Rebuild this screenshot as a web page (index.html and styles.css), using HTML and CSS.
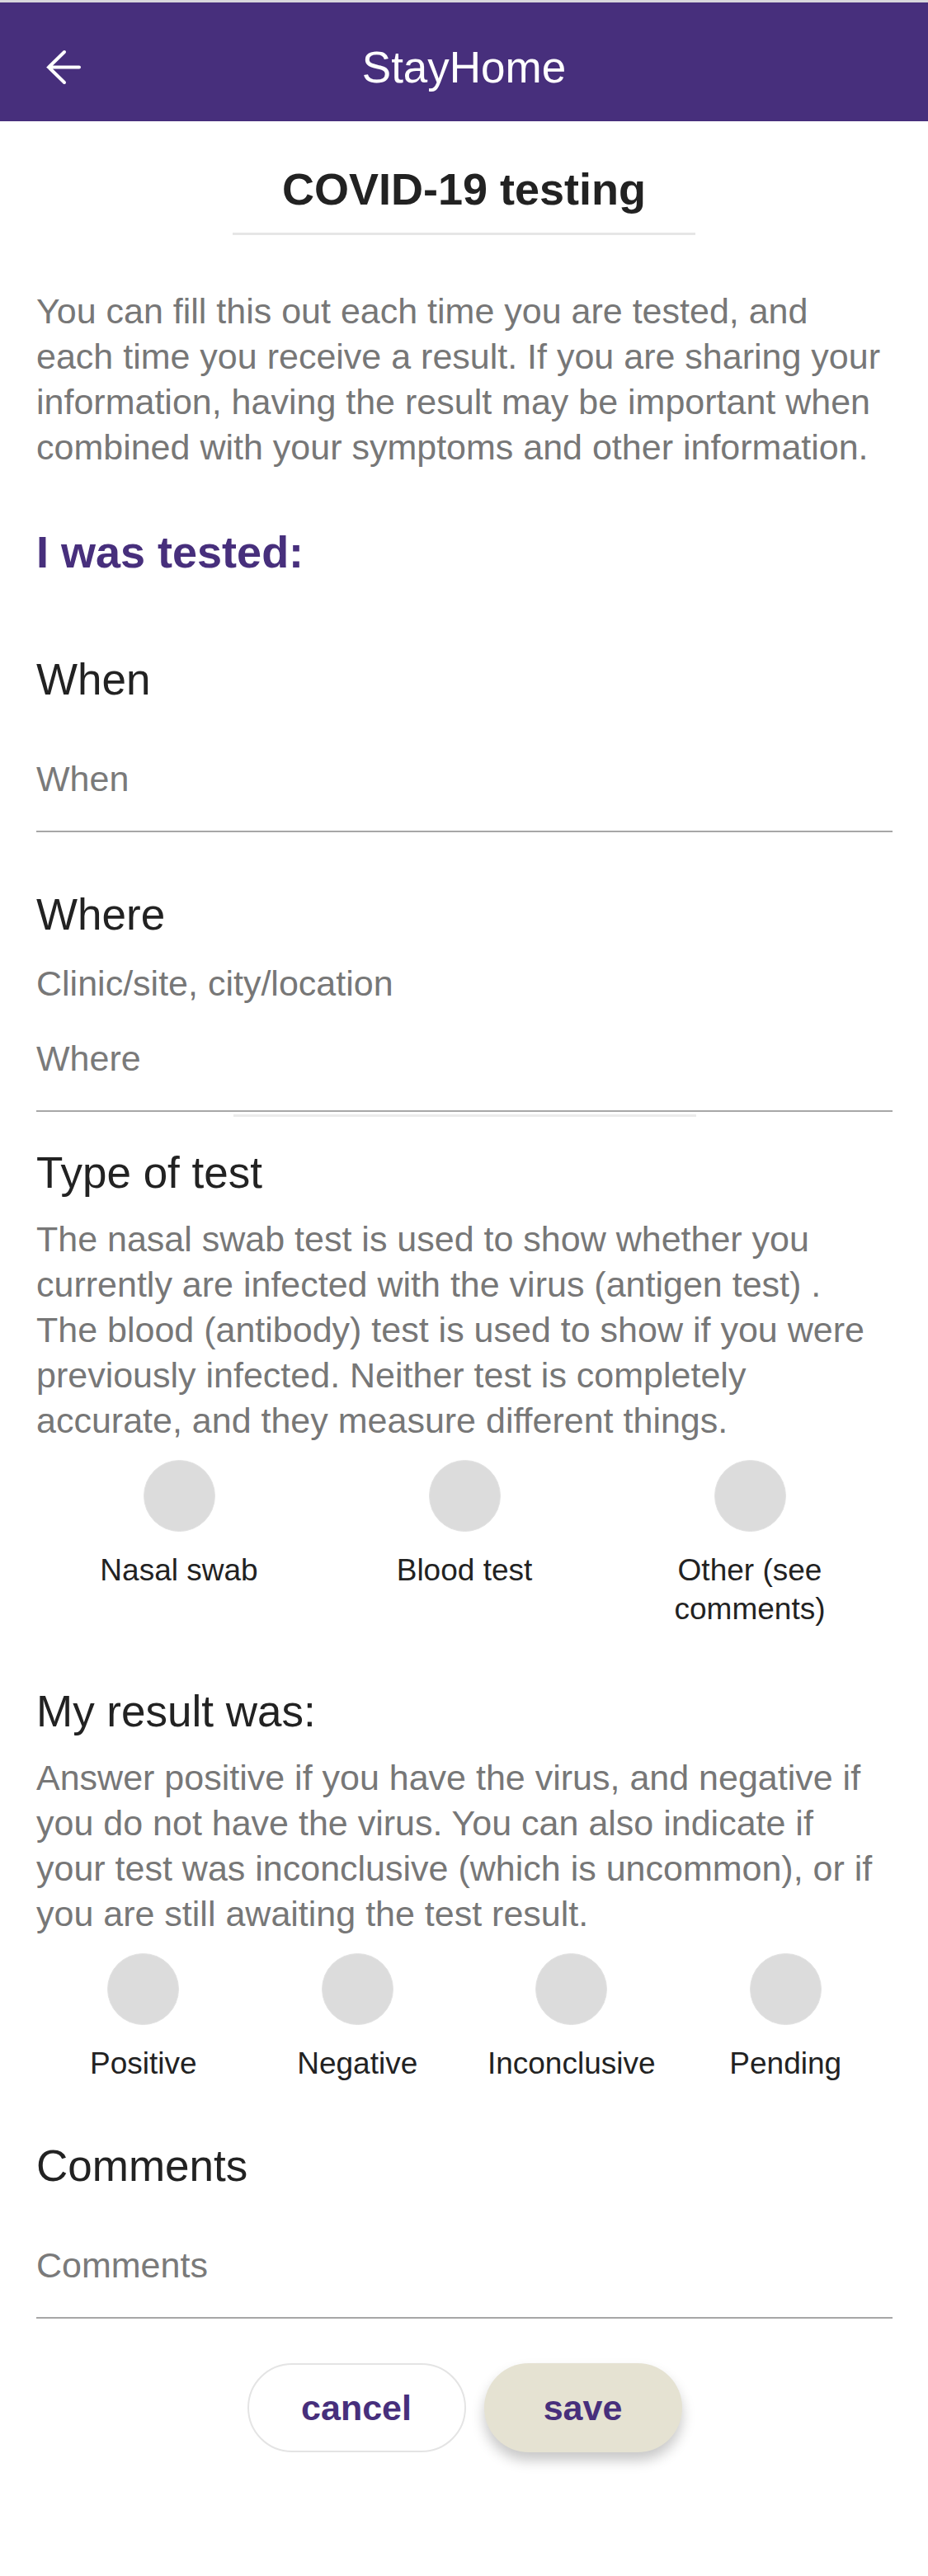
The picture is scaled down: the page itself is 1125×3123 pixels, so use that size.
FILE: index.html
```html
<!DOCTYPE html>
<html lang="en">
<head>
<meta charset="utf-8">
<title>StayHome - COVID-19 testing</title>
<link rel="stylesheet" href="styles.css">
</head>
<body>
<div class="statusbar"></div>
<header class="appbar">
  <button class="back" aria-label="Back">
    <svg viewBox="0 0 43 43" width="43" height="43" aria-hidden="true">
      <path d="M41 21.5 H4 M23 3 L4 21.5 L23 40" fill="none" stroke="#fff" stroke-width="4" stroke-linecap="round" stroke-linejoin="miter"/>
    </svg>
  </button>
  <h1 class="appbar-title">StayHome</h1>
  <span class="appbar-spacer"></span>
</header>

<main class="page">
  <div class="title-wrap">
    <h2 class="page-title">COVID-19 testing</h2>
    <div class="title-rule"></div>
  </div>

  <div class="content">
    <p class="intro">You can fill this out each time you are tested, and<br>each time you receive a result. If you are sharing your<br>information, having the result may be important when<br>combined with your symptoms and other information.</p>

    <h3 class="section-title">I was tested:</h3>

    <div class="field">
      <div class="field-label">When</div>
      <div class="input">When</div>
    </div>

    <div class="field field-where">
      <div class="field-label">Where</div>
      <div class="field-hint">Clinic/site, city/location</div>
      <div class="input input-after-hint">Where</div>
    </div>
    <div class="ghost-rule"></div>

    <div class="field field-type">
      <div class="field-label">Type of test</div>
      <p class="field-desc">The nasal swab test is used to show whether you<br>currently are infected with the virus (antigen test) .<br>The blood (antibody) test is used to show if you were<br>previously infected. Neither test is completely<br>accurate, and they measure different things.</p>
      <div class="options options-3">
        <div class="option"><span class="radio"></span><span class="option-label">Nasal swab</span></div>
        <div class="option"><span class="radio"></span><span class="option-label">Blood test</span></div>
        <div class="option"><span class="radio"></span><span class="option-label">Other (see<br>comments)</span></div>
      </div>
    </div>

    <div class="field field-section">
      <div class="field-label">My result was:</div>
      <p class="field-desc">Answer positive if you have the virus, and negative if<br>you do not have the virus. You can also indicate if<br>your test was inconclusive (which is uncommon), or if<br>you are still awaiting the test result.</p>
      <div class="options options-4">
        <div class="option"><span class="radio"></span><span class="option-label">Positive</span></div>
        <div class="option"><span class="radio"></span><span class="option-label">Negative</span></div>
        <div class="option"><span class="radio"></span><span class="option-label">Inconclusive</span></div>
        <div class="option"><span class="radio"></span><span class="option-label">Pending</span></div>
      </div>
    </div>

    <div class="field field-section">
      <div class="field-label">Comments</div>
      <div class="input">Comments</div>
    </div>

    <div class="actions">
      <button class="btn btn-cancel">cancel</button>
      <button class="btn btn-save">save</button>
    </div>
  </div>
</main>
</body>
</html>
```

FILE: styles.css
```css
html, body {
  margin: 0;
  padding: 0;
  background: #ffffff;
}

body {
  font-family: "Liberation Sans", Arial, Helvetica, sans-serif;
  color: #222222;
  min-height: 3123px;
}

.statusbar {
  height: 3px;
  background: #d8d7dc;
}

.appbar {
  height: 144px;
  box-sizing: border-box;
  padding-top: 13px;
  background: #472f7c;
  display: grid;
  grid-template-columns: 1fr auto 1fr;
  align-items: center;
}

.back {
  justify-self: start;
  margin-left: 55px;
  width: 43px;
  height: 43px;
  padding: 0;
  border: none;
  background: transparent;
  display: flex;
}

.appbar-title {
  margin: 0;
  font-size: 53px;
  line-height: 60px;
  font-weight: normal;
  color: #ffffff;
}

.title-wrap {
  padding-top: 50px;
  text-align: center;
}

.page-title {
  margin: 0;
  font-size: 54px;
  line-height: 64px;
  font-weight: bold;
  color: #222222;
}

.title-rule {
  width: 561px;
  height: 3px;
  margin: 21px auto 0;
  background: #e6e6e6;
}

.content {
  padding: 0 43px 0 44px;
}

.intro {
  margin: 65px 0 0;
  font-size: 43px;
  line-height: 55px;
  color: #777777;
}

.section-title {
  margin: 67px 0 0;
  font-size: 54px;
  line-height: 64px;
  font-weight: bold;
  color: #472f7c;
}

.field-label {
  margin-top: 92px;
  font-size: 53px;
  line-height: 62px;
  color: #222222;
}

.field-where .field-label {
  margin-top: 69px;
}

.field-type .field-label {
  margin-top: 37px;
}

.field-section .field-label {
  margin-top: 70px;
}

.field-hint {
  margin-top: 25px;
  font-size: 43px;
  line-height: 55px;
  color: #777777;
}

.input {
  margin-top: 64px;
  font-size: 43px;
  line-height: 50px;
  color: #7a7a7a;
  padding-bottom: 38px;
  border-bottom: 2px solid #a7a7a7;
}

.input-after-hint {
  margin-top: 38px;
}

.ghost-rule {
  width: 561px;
  height: 3px;
  margin: 3px auto 0;
  background: #ebebeb;
}

.field-desc {
  margin: 22px 0 0;
  font-size: 43px;
  line-height: 55px;
  color: #777777;
}

.options {
  display: grid;
  margin-top: 20px;
}

.options-3 {
  grid-template-columns: repeat(3, 1fr);
}

.options-4 {
  grid-template-columns: repeat(4, 1fr);
}

.option {
  display: flex;
  flex-direction: column;
  align-items: center;
  text-align: center;
}

.radio {
  width: 87px;
  height: 87px;
  box-sizing: border-box;
  border-radius: 50%;
  background: #dcdcdc;
  border: 1px solid #e3e3e3;
}

.option-label {
  margin-top: 23px;
  font-size: 37px;
  line-height: 47px;
  color: #222222;
}

.actions {
  display: flex;
  justify-content: center;
  gap: 22px;
  margin-top: 54px;
}

.btn {
  height: 108px;
  box-sizing: border-box;
  border-radius: 54px;
  font-family: "Liberation Sans", Arial, Helvetica, sans-serif;
  font-size: 43px;
  font-weight: bold;
  color: #472f7c;
  padding: 0;
}

.btn-cancel {
  width: 265px;
  background: #ffffff;
  border: 2px solid #e4e4e4;
}

.btn-save {
  width: 240px;
  background: #e5e2d2;
  border: none;
  box-shadow: 0 10px 16px rgba(0, 0, 0, 0.22);
}
```
